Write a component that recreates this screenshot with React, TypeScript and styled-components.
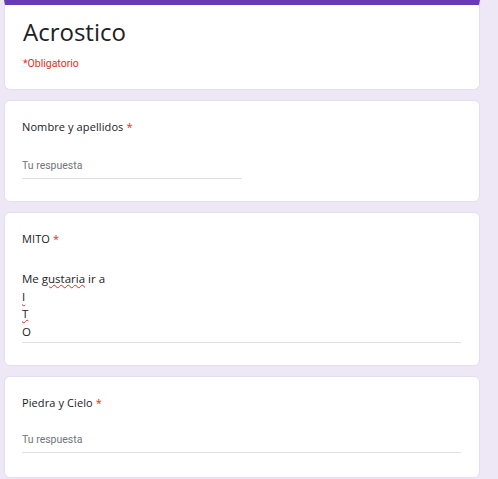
import React from 'react';
import styled, { createGlobalStyle } from 'styled-components';

const GlobalStyle = createGlobalStyle`
  html, body {
    margin: 0;
    padding: 0;
    background: #ede7f6;
  }
  body {
    font-family: Roboto, "Liberation Sans", sans-serif;
    color: #202124;
  }
`;

const Page = styled.main`
  width: 476px;
  margin: 0 18px 0 4px;
  display: flex;
  flex-direction: column;
  gap: 10px;
`;

const Card = styled.section<{ $head?: boolean; $pb?: number }>`
  background: #fff;
  border: 1px solid #e3dff0;
  border-radius: ${p => (p.$head ? '0 0 6px 6px' : '6px')};
  border-top: ${p => (p.$head ? '5px solid #673ab7' : '1px solid #e3dff0')};
  padding: ${p => (p.$head ? '9px 18px 0 18px' : '17px 18px 0 17px')};
  padding-bottom: ${p => p.$pb ?? 22}px;
  box-sizing: border-box;
`;

const Title = styled.h1`
  margin: 0;
  font-family: "Open Sans", "Noto Sans", sans-serif;
  font-weight: 400;
  font-size: 24px;
  line-height: 36px;
  color: #202124;
`;

const Required = styled.div`
  margin-top: 6px;
  font-family: Roboto, "Liberation Sans", sans-serif;
  font-size: 10.5px;
  line-height: 16px;
  color: #d93025;
`;

const Label = styled.div`
  font-family: "Open Sans", "Noto Sans", sans-serif;
  font-size: 11px;
  line-height: 18px;
  color: #202124;
  letter-spacing: 0.1px;
`;

const Star = styled.span`
  color: #d93025;
  margin-left: 3px;
`;

const Answer = styled.div<{ $full?: boolean; $gap: number }>`
  margin-top: ${p => p.$gap}px;
  width: ${p => (p.$full ? '100%' : '50%')};
  border-bottom: 1px solid #e0e0e0;
  padding-bottom: 2px;
`;

const Placeholder = styled.div`
  font-family: Roboto, "Liberation Sans", sans-serif;
  font-size: 10.5px;
  line-height: 20px;
  color: #70757a;
`;

const Lines = styled.div`
  font-family: "Open Sans", "Noto Sans", sans-serif;
  font-size: 11.5px;
  line-height: 17.6px;
  color: #202124;
`;

const Typo = styled.span`
  text-decoration: underline wavy #d93025;
  text-decoration-thickness: 1px;
  text-underline-offset: 1px;
`;

const Question = ({ label, full, gap, pb }: { label: string; full?: boolean; gap: number; pb: number }) => (
  <Card $pb={pb}>
    <Label>
      {label}
      <Star>*</Star>
    </Label>
    <Answer $full={full} $gap={gap}>
      <Placeholder>Tu respuesta</Placeholder>
    </Answer>
  </Card>
);

export default function App() {
  return (
    <>
      <GlobalStyle />
      <Page>
        <Card $head $pb={17}>
          <Title>Acrostico</Title>
          <Required>*Obligatorio</Required>
        </Card>

        <Question label="Nombre y apellidos" gap={20} pb={22} />

        <Card $pb={22}>
          <Label>
            MITO
            <Star>*</Star>
          </Label>
          <Answer $full $gap={22}>
            <Lines>
              <div>
                Me <Typo>gustaria</Typo> ir a
              </div>
              <div>
                <Typo>I</Typo>
              </div>
              <div>
                <Typo>T</Typo>
              </div>
              <div>O</div>
            </Lines>
          </Answer>
        </Card>

        <Question label="Piedra y Cielo" full gap={18} pb={24} />
      </Page>
    </>
  );
}
